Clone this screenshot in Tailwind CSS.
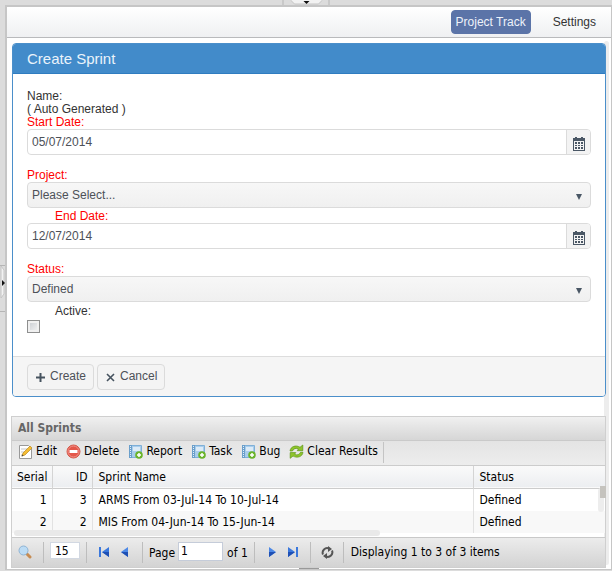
<!DOCTYPE html>
<html lang="en">
<head>
<meta charset="utf-8">
<title>Create Sprint</title>
<script src="https://cdn.jsdelivr.net/npm/@tailwindcss/browser@4"></script>
</head>
<body class="bg-[#dcdcdc] font-['Liberation_Sans',Arial,sans-serif] text-[12px] leading-[13px] text-[#333]">
<svg class="hidden">
  <symbol id="calendar" viewBox="0 0 12 14"><path fill="#4a5765" d="M0 1h2V0h2v1h4V0h2v1h2v13H0z"/><path fill="#f3f3f3" d="M1 4h10v9H1z"/><path fill="#4a5765" d="M2 5h2v2H2zM5 5h2v2H5zM8 5h2v2H8zM2 8h2v1H2zM5 8h2v1H5zM8 8h2v1H8zM2 10h2v2H2zM5 10h2v2H5zM8 10h2v2H8z"/></symbol>
  <symbol id="book" viewBox="0 0 15 15"><path fill="#a9cdec" stroke="#7fb0d8" d="M1.500 1.500h12v12h-12z"/><path fill="#6a9fcb" d="M1 1h3v13H1z"/><path stroke="#e3f0fa" stroke-dasharray="1 1" d="M2.500 2v11"/><path fill="#dcebf7" d="M5 3h7v4H5z"/><circle cx="11" cy="11" r="3.800" fill="#6bb42a"/><path stroke="#fff" stroke-width="1.500" d="M11 9v4M9 11h4"/></symbol>
</svg>
<div class="relative min-h-screen pt-[5px] pl-[5px] pb-px flex flex-col">
  <div class="absolute top-0 left-1/2 -translate-x-1/2 w-[47px] h-[5px] border-x border-[#b5b5b5] flex justify-center">
    <svg width="32" height="5" viewBox="0 0 32 5"><path fill="#f2f2f2" stroke="#c4c4c4" d="M0 0l4 4h24l4-4"/><path fill="#111" d="M13 1h6l-3 3z"/></svg>
  </div>
  <div class="absolute left-0 top-[265px] w-[5px] h-[47px] border-y border-[#b5b5b5]">
    <svg width="5" height="32" viewBox="0 0 5 32"><path fill="#f2f2f2" stroke="#c4c4c4" d="M1 0l3 4v24l-3 4z"/><path fill="#111" d="M2 14v6l3-3z"/></svg>
  </div>
  <main class="relative grow flex flex-col bg-white border-t-2 border-l-2 border-r border-b border-[#c6c6c6]">
    <nav class="h-[31px] flex items-center justify-end gap-[22px] pr-[15px] pb-px bg-linear-to-b from-white to-[#eff0f2] border-b border-[#b9babc] text-xs text-[#333]">
      <a href="#track" class="h-6 px-1 flex items-center rounded bg-[#5b74a8] border border-[#5b74a8] text-[#eef2fa]">Project Track</a>
      <a href="#settings">Settings</a>
    </nav>
    <div class="absolute top-[34px] right-[2px] bottom-[4px] w-[5px] rounded bg-[#ededed]"></div>

    <form class="relative mt-[5px] ml-[5px] mr-[5px] rounded border border-[#4b8fca] bg-white overflow-hidden">
      <h1 class="h-[30px] pl-[14px] flex items-center bg-[#428bca] border-b border-[#2f7cc0] text-[15px] text-[#eaf3fb]">Create Sprint</h1>
      <div class="pt-4 pl-[14px] pr-[14px] pb-[22px]">
        <div>Name:</div>
        <div>( Auto Generated )</div>
        <label for="start" class="block text-[#f00]">Start Date:</label>
        <div class="h-[26px] flex border border-[#dbdbdb] rounded overflow-hidden">
          <input id="start" type="text" value="05/07/2014" class="grow min-w-0 px-1 text-[#4d5158] outline-none">
          <button type="button" aria-label="Pick start date" class="w-6 pt-1 flex items-center justify-center bg-[#f3f3f3] border-l border-[#dbdbdb]"><svg width="12" height="14"><use href="#calendar"/></svg></button>
        </div>
        <label for="project" class="block mt-[14px] text-[#f00]">Project:</label>
        <div class="relative">
          <select id="project" class="appearance-none block w-full h-[26px] px-1 border border-[#dbdbdb] rounded bg-linear-to-b from-[#f7f7f7] to-[#f0f0f0] text-[#4d5158]"><option>Please Select...</option></select>
          <svg class="absolute right-[9px] top-[12px] pointer-events-none" width="6" height="6" viewBox="0 0 6 6"><path fill="#4a5765" d="M0 0h6L3 6z"/></svg>
        </div>
        <label for="end" class="block mt-[2px] pl-7 text-[#f00]">End Date:</label>
        <div class="h-[26px] flex border border-[#dbdbdb] rounded overflow-hidden">
          <input id="end" type="text" value="12/07/2014" class="grow min-w-0 px-1 text-[#4d5158] outline-none">
          <button type="button" aria-label="Pick end date" class="w-6 pt-1 flex items-center justify-center bg-[#f3f3f3] border-l border-[#dbdbdb]"><svg width="12" height="14"><use href="#calendar"/></svg></button>
        </div>
        <label for="status" class="block mt-[14px] text-[#f00]">Status:</label>
        <div class="relative">
          <select id="status" class="appearance-none block w-full h-[26px] px-1 border border-[#dbdbdb] rounded bg-linear-to-b from-[#f7f7f7] to-[#f0f0f0] text-[#4d5158]"><option>Defined</option></select>
          <svg class="absolute right-[9px] top-[12px] pointer-events-none" width="6" height="6" viewBox="0 0 6 6"><path fill="#4a5765" d="M0 0h6L3 6z"/></svg>
        </div>
        <label for="active" class="block mt-[3px] pl-7">Active:</label>
        <input id="active" type="checkbox" class="appearance-none block mt-[2px] mb-px size-[13px] border border-[#8e8f8f] bg-linear-to-br from-[#c6cacf] to-[#f6f6f6] ring-2 ring-inset ring-[#f0f0f0]">
      </div>
      <div class="h-10 flex items-center gap-[3px] pl-[14px] bg-[#f5f5f5] border-t border-[#ddd]">
        <button type="submit" class="h-[26px] px-[7px] flex items-center gap-1 rounded border border-[#dbdbdb] bg-[#f4f4f4] text-[#4d5158]"><svg class="mt-[2px]" width="11" height="11" viewBox="0 0 11 11"><path stroke="#46535f" stroke-width="2" d="M5.500 1v9M1 5.500h9"/></svg>Create</button>
        <button type="button" class="h-[26px] px-[7px] flex items-center gap-1 rounded border border-[#dbdbdb] bg-[#f4f4f4] text-[#4d5158]"><svg class="mt-[2px]" width="11" height="11" viewBox="0 0 11 11"><path stroke="#46535f" stroke-width="1.600" d="M2 2l7 7M9 2L2 9"/></svg>Cancel</button>
      </div>
    </form>

    <section class="relative mt-[19px] ml-[4px] mr-[5px] border border-[#cfcfcf] font-['DejaVu_Sans_Condensed','DejaVu_Sans',Tahoma,sans-serif] text-xs leading-[14px] text-black">
      <h2 class="h-6 pl-[6px] pb-px flex items-center bg-linear-to-b from-[#f0f0f0] to-[#d6d6d6] border-b border-[#cacaca] font-bold text-[#666]">All Sprints</h2>
      <div class="h-[25px] flex items-center gap-[9px] pl-[6px] pb-[4px] bg-linear-to-b from-[#e4e4e4] to-[#ededed] border-b border-[#ccc]">
        <button class="flex items-center gap-[3px]"><svg width="15" height="15" viewBox="0 0 15 15"><path fill="#fff" stroke="#999" d="M1.500 1.500h9l3 3v10h-12z"/><path stroke="#c5c5c5" d="M3 5h6M3 8h4M3 11h3"/><path fill="#f5bd35" stroke="#b98a20" stroke-width=".7" d="M4 12l1-3 7-7 2 2-7 7z"/><path fill="#444" d="M3.500 12.500l.8-2 1.200 1.200z"/></svg>Edit</button>
        <button class="flex items-center gap-[3px]"><svg width="15" height="15" viewBox="0 0 15 15"><circle cx="7.500" cy="7.500" r="6.500" fill="#e4574a" stroke="#d2594a"/><circle cx="7.500" cy="7.500" r="5.500" fill="none" stroke="#f1928a"/><path fill="#fff" d="M3.500 6h8v3h-8z"/></svg>Delete</button>
        <button class="flex items-center gap-[3px]"><svg width="15" height="15"><use href="#book"/></svg>Report</button>
        <button class="flex items-center gap-[3px]"><svg width="15" height="15"><use href="#book"/></svg>Task</button>
        <button class="flex items-center gap-[3px]"><svg width="15" height="15"><use href="#book"/></svg>Bug</button>
        <button class="flex items-center gap-[3px]"><svg width="15" height="15" viewBox="0 0 15 15"><g fill="#8fc52c" stroke="#5f9618" stroke-width=".7"><path d="M1 7C1.500 2.500 7 .5 11 3.300L13.800 1v5.700H8.200L9.500 5C7 3.700 4.500 4.500 3.500 7z"/><path d="M14 8.300C13.500 12.800 8 14.500 4 12L1.200 14.300V8.600H6.800L5.500 10.300C8 11.500 10.500 10.800 11.500 8.300z"/></g></svg>Clear Results</button>
        <span class="-ml-1 w-px h-[21px] mt-[2px] bg-[#c4c4c4]"></span>
      </div>
      <table class="w-full table-fixed border-collapse bg-white">
        <colgroup><col class="w-[40px]"><col class="w-[40px]"><col><col class="w-[132px]"></colgroup>
        <thead><tr class="h-[22px] bg-linear-to-b from-[#fafafa] to-[#eceef1] border-b border-[#ccc]">
          <th class="font-normal text-right pr-1 border-r border-[#d4d4d4]">Serial</th><th class="font-normal text-right pr-1 border-r border-[#d4d4d4]">ID</th><th class="font-normal text-left pl-[6px] border-r border-[#d4d4d4]">Sprint Name</th><th class="font-normal text-left pl-[6px]">Status</th></tr></thead>
        <tbody>
          <tr class="h-[23px]"><td class="text-right pr-[5px] border-r border-[#e2e2e2]">1</td><td class="text-right pr-[5px] border-r border-[#e2e2e2]">3</td><td class="pl-[6px] border-r border-[#e2e2e2]">ARMS From 03-Jul-14 To 10-Jul-14</td><td class="pl-[6px]">Defined</td></tr>
          <tr class="h-[22px] bg-[#f8f8f8]"><td class="text-right pr-[5px] border-r border-[#e2e2e2]">2</td><td class="text-right pr-[5px] border-r border-[#e2e2e2]">2</td><td class="pl-[6px] border-r border-[#e2e2e2]">MIS From 04-Jun-14 To 15-Jun-14</td><td class="pl-[6px]">Defined</td></tr>
        </tbody>
      </table>
      <div class="absolute left-[2px] bottom-[31px] w-[366px] h-[6px] rounded-full bg-[#e9e9e9]"></div>
      <div class="absolute right-px top-[71px] w-[6px] h-[24px] rounded bg-[#ededed]"></div>
      <div class="absolute right-[-1px] top-[69px] w-[6px] h-[12px] bg-[#c5c3be]"></div>
      <div class="mt-[4px] h-[30px] flex items-center pl-[6px] pb-px bg-linear-to-b from-[#ececec] to-[#d3d3d3] border-t border-[#c9c9c9]">
        <button aria-label="Search" class="mr-[11px]"><svg class="block" width="14" height="14" viewBox="0 0 14 14"><path stroke="#c78c52" stroke-width="3" stroke-linecap="round" d="M9 9l3 3"/><circle cx="5.500" cy="5.500" r="4.500" fill="#bcdcf5" stroke="#8fb4d4"/></svg></button>
        <span class="w-px h-[21px] bg-[#bdbdbd]"></span>
        <input aria-label="Rows per page" value="15" class="ml-[6px] mr-[6px] mb-[3px] w-[30px] h-[17px] pl-1 bg-white border border-[#d2d8e2] outline-none">
        <span class="w-px h-[21px] bg-[#bdbdbd]"></span>
        <button aria-label="First page" class="ml-[11px]"><svg class="block" width="12" height="12" viewBox="0 0 12 12"><path fill="#3b78dc" d="M1 1h2v10H1zM11 1v10L4 6z"/><path fill="#1f50b4" d="M11 6v5L4 6z"/></svg></button>
        <button aria-label="Previous page" class="ml-[11px]"><svg class="block" width="7" height="12" viewBox="0 0 7 12"><path fill="#4c88e6" d="M7 1v10L0 6z"/><path fill="#1f50b4" d="M7 6v5L0 6z"/></svg></button>
        <span class="ml-[14px] w-px h-[21px] bg-[#bdbdbd]"></span>
        <label for="page" class="ml-[6px] mt-[2px]">Page</label>
        <input id="page" value="1" class="ml-[3px] mr-1 mb-[2px] w-[45px] h-[19px] pl-[2px] bg-white border border-[#c5ccd9] outline-none">
        <span class="mt-[2px]">of 1</span>
        <span class="ml-[6px] w-px h-[21px] bg-[#bdbdbd]"></span>
        <button aria-label="Next page" class="ml-[14px]"><svg class="block" width="7" height="12" viewBox="0 0 7 12"><path fill="#4c88e6" d="M0 1v10l7-5z"/><path fill="#1f50b4" d="M0 6v5l7-5z"/></svg></button>
        <button aria-label="Last page" class="ml-[11px]"><svg class="block" width="12" height="12" viewBox="0 0 12 12"><path fill="#3b78dc" d="M9 1h2v10H9zM1 1v10l7-5z"/><path fill="#1f50b4" d="M1 6v5l7-5z"/></svg></button>
        <span class="ml-[11px] w-px h-[21px] bg-[#bdbdbd]"></span>
        <button aria-label="Refresh" class="ml-[10px]"><svg class="block" width="13" height="13" viewBox="0 0 13 13"><path fill="none" stroke="#555" stroke-width="2" d="M2 8.500A4.600 4.600 0 0 1 8 2.500M11 4.500A4.600 4.600 0 0 1 5 10.500"/><path fill="#555" d="M7 0l4 3-4 3zM6 7v6l-4-3z"/></svg></button>
        <span class="ml-[9px] w-px h-[21px] bg-[#bdbdbd]"></span>
        <span class="ml-[7px]">Displaying 1 to 3 of 3 items</span>
      </div>
    </section>
    <div class="absolute bottom-0 left-1/2 -translate-x-1/2 w-5 h-px bg-[#999]"></div>
  </main>
</div>
</body>
</html>
